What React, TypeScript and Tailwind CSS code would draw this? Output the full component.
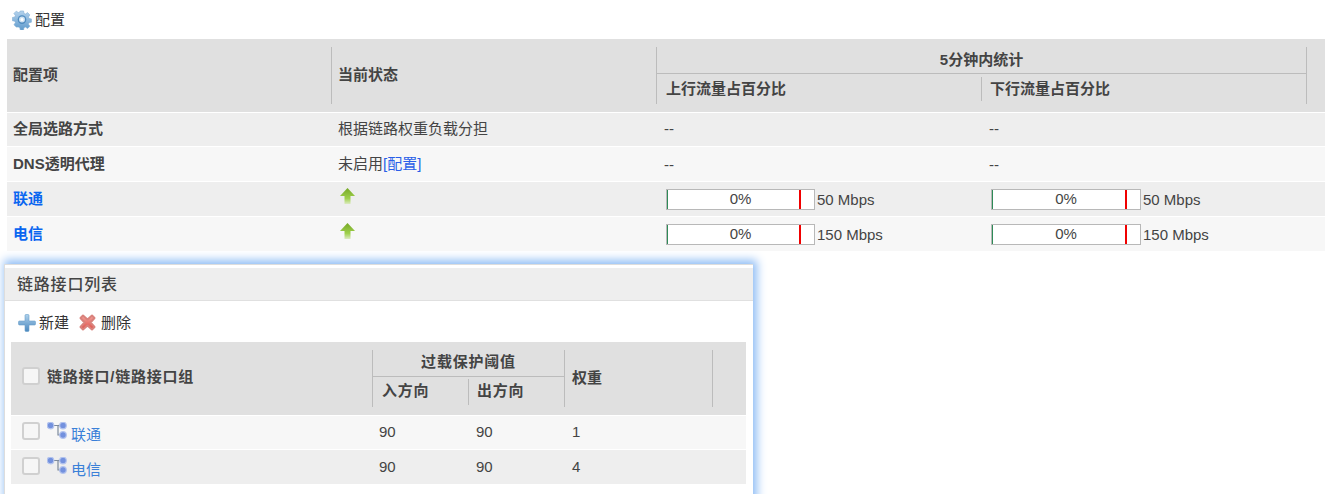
import React from 'react';

const font = { fontFamily: '"Liberation Sans", "Noto Sans CJK SC", sans-serif' };

const Gear = () => (
    <svg width="20" height="20" viewBox="0 0 20 20">
        <defs>
            <linearGradient id="gearFill" x1="0" y1="0" x2="0" y2="1">
                <stop offset="0" stopColor="#b4d2ec" />
                <stop offset="1" stopColor="#5f9bcd" />
            </linearGradient>
        </defs>
        <path
            d="M8.2 1h3.4l.5 2.6 1.500.6 2.200-1.500 2.400 2.400-1.500 2.200.6 1.500 2.500.5v3.400l-2.500.5-.6 1.500 1.500 2.200-2.400 2.400-2.200-1.500-1.500.6-.5 2.500H8.200l-.5-2.500-1.500-.6L4 17.800l-2.400-2.400 1.500-2.200-.6-1.500L0 11.200V7.800l2.500-.5.6-1.500L1.600 3.600 4 1.200l2.200 1.500 1.500-.6z"
            transform="translate(0.400 0) scale(0.960)"
            fill="url(#gearFill)"
            stroke="#7fadd3"
            strokeWidth="0.600"
        />
        <circle cx="10" cy="9.600" r="4.300" fill="#4f8cc0" />
        <circle cx="10" cy="9.600" r="3" fill="#cfe2f2" />
        <circle cx="10" cy="9.600" r="1.500" fill="#ffffff" />
    </svg>
);

const UpArrow = () => (
    <svg width="15" height="17" viewBox="0 0 15 17" className="block">
        <defs>
            <linearGradient id="arrowFill" x1="0" y1="0" x2="0" y2="1">
                <stop offset="0" stopColor="#76a826" />
                <stop offset="0.65" stopColor="#9fd04c" />
                <stop offset="1" stopColor="#dcebc0" />
            </linearGradient>
        </defs>
        <path d="M7.500 0 15 8H10.500V16H4.500V8H0Z" fill="url(#arrowFill)" />
    </svg>
);

const PlusIcon = () => (
    <svg width="18" height="18" viewBox="0 0 18 18">
        <defs>
            <linearGradient id="plusFill" x1="0" y1="0" x2="0" y2="1">
                <stop offset="0" stopColor="#b0d2ec" />
                <stop offset="1" stopColor="#4a88bf" />
            </linearGradient>
        </defs>
        <path
            d="M7 1.500a1 1 0 0 1 1-1h2a1 1 0 0 1 1 1V7h5.500a1 1 0 0 1 1 1v2a1 1 0 0 1-1 1H11v5.500a1 1 0 0 1-1 1H8a1 1 0 0 1-1-1V11H1.500a1 1 0 0 1-1-1V8a1 1 0 0 1 1-1H7z"
            fill="url(#plusFill)"
            stroke="#6a9fcb"
            strokeWidth="0.600"
        />
    </svg>
);

const CrossIcon = () => (
    <svg width="17" height="17" viewBox="0 0 17 17">
        <defs>
            <linearGradient id="crossFill" x1="0" y1="0" x2="0" y2="1">
                <stop offset="0" stopColor="#f4a29c" />
                <stop offset="1" stopColor="#de5048" />
            </linearGradient>
        </defs>
        <path
            d="M1.500 4 4 1.500 8.500 5.500 13 1.500 15.500 4 11.500 8.500 15.500 13 13 15.500 8.500 11.500 4 15.500 1.500 13 5.500 8.500Z"
            fill="url(#crossFill)"
            stroke="#d9827c"
            strokeWidth="2"
            strokeLinejoin="round"
        />
    </svg>
);

const RouteIcon = () => (
    <svg width="20" height="17" viewBox="0 0 20 17" className="block">
        <path d="M5 3.500H11V13H15" fill="none" stroke="#7d8a9c" strokeWidth="1.200" />
        <path d="M11 3.500H15" fill="none" stroke="#7d8a9c" strokeWidth="1.200" />
        <circle cx="3.500" cy="3.500" r="3.300" fill="#7391de" stroke="#b4c4ee" strokeWidth="1.200" />
        <circle cx="16" cy="3.500" r="3.300" fill="#7391de" stroke="#b4c4ee" strokeWidth="1.200" />
        <circle cx="16" cy="13" r="3.300" fill="#7391de" stroke="#b4c4ee" strokeWidth="1.200" />
    </svg>
);

const Checkbox = () => (
    <span className="block w-[18px] h-[18px] bg-[#f6f6f6] border-2 border-[#d0d0d0] rounded-[3px]" />
);

const Usage = ({ bandwidth, redLeft }: { bandwidth: string; redLeft: string }) => (
    <div className="flex items-center">
        <div className={`relative h-[21px] bg-white border border-[#b8b8b8] flex items-center justify-center ${redLeft === 'a' ? 'w-[149px]' : 'w-[150px]'}`}>
            <span className="absolute left-0 top-0 bottom-0 w-px bg-[#2e8b57]" />
            <span className={`absolute top-0 bottom-0 w-[2px] bg-[#f00000] ${redLeft === 'a' ? 'left-[132px]' : 'left-[133px]'}`} />
            <span className="-mt-[2px]">0%</span>
        </div>
        <span className="ml-[2px] mt-[1px]">{bandwidth}</span>
    </div>
);

const links = [
    { name: '联通', bandwidth: '50 Mbps', rowBg: 'bg-[#eeeeee]' },
    { name: '电信', bandwidth: '150 Mbps', rowBg: 'bg-[#f7f7f7]' },
];

const interfaces = [
    { name: '联通', weight: '1', rowCls: 'h-[33px] bg-[#f7f7f7]', numCls: 'pb-[2px]', nameCls: 'pt-[6px]' },
    { name: '电信', weight: '4', rowCls: 'h-[34px] bg-[#eeeeee]', numCls: 'pb-[1px]', nameCls: 'pt-[7px]' },
];

const App: React.FC = () => {
    return (
        <div className="h-[494px] w-[1325px] overflow-hidden bg-white text-[15px] leading-none text-[#444444]" style={font}>
            <div className="h-[39px] pl-[12px] pt-[10px] flex items-start gap-[3px]">
                <Gear />
                <span className="text-[#333333] pt-[2px]">配置</span>
            </div>

            <div className="ml-[7px] flex flex-col gap-px">
                <div className="h-[73px] bg-[#e0e0e0] py-[8px] flex font-bold">
                    <div className="w-[325px] pl-[6px] pb-[2px] flex items-center border-r border-[#bcbcbc]">配置项</div>
                    <div className="w-[325px] pl-[6px] pb-[2px] flex items-center border-r border-[#bcbcbc]">当前状态</div>
                    <div className="w-[650px] flex flex-col border-r border-[#bcbcbc]">
                        <div className="h-[27px] flex items-center justify-center border-b border-[#bcbcbc] pb-[2px]">5分钟内统计</div>
                        <div className="flex flex-1 pt-[3px] pb-[3px]">
                            <div className="w-[325px] pl-[9px] flex items-center border-r border-[#bcbcbc] pb-[2px]">上行流量占百分比</div>
                            <div className="pl-[8px] flex items-center pb-[2px]">下行流量占百分比</div>
                        </div>
                    </div>
                </div>

                <div className="h-[33px] bg-[#eeeeee] flex items-center">
                    <div className="w-[325px] pl-[6px] pb-[2px] font-bold">全局选路方式</div>
                    <div className="w-[325px] pl-[6px] pb-[2px]">根据链路权重负载分担</div>
                    <div className="w-[325px] pl-[7px] pb-[2px]">--</div>
                    <div className="pl-[7px] pb-[2px]">--</div>
                </div>
                <div className="h-[34px] bg-[#f7f7f7] flex items-center">
                    <div className="w-[325px] pl-[6px] pb-[2px] font-bold">DNS透明代理</div>
                    <div className="w-[325px] pl-[6px] pb-[2px]">未启用<span className="text-[#2a5fe8]">[配置]</span></div>
                    <div className="w-[325px] pl-[7px]">--</div>
                    <div className="pl-[7px]">--</div>
                </div>
                {links.map((l) => (
                    <div key={l.name} className={`h-[34px] flex items-center ${l.rowBg}`}>
                        <div className="w-[325px] pl-[6px] pb-[2px] font-bold text-[#0a66f0]">{l.name}</div>
                        <div className="w-[325px] pl-[8px] pb-[6px]"><span className="block w-[15px]"><UpArrow /></span></div>
                        <div className="w-[325px] pl-[9px]"><Usage bandwidth={l.bandwidth} redLeft="a" /></div>
                        <div className="pl-[9px]"><Usage bandwidth={l.bandwidth} redLeft="b" /></div>
                    </div>
                ))}
            </div>

            <div className="ml-[4px] mt-[13px] w-[749px] h-[300px] bg-white border-l border-t border-[#dddddd] pt-[3px] shadow-[2px_-2px_9px_2px_#8fbdf5]">
                <div className="h-[33px] bg-[#eeeeee] border-b border-[#e0e0e0] pl-[12px] pt-[1px] flex items-center text-[16px] font-medium tracking-[0.8px] text-[#444444]">
                    链路接口列表
                </div>
                <div className="h-[41px] pl-[13px] pt-[13px] flex items-start text-[#333333]">
                    <PlusIcon />
                    <span className="ml-[3px] pt-[1px]">新建</span>
                    <span className="ml-[10px]"><CrossIcon /></span>
                    <span className="ml-[5px] pt-[1px]">删除</span>
                </div>
                <div className="ml-[6px] w-[735px] flex flex-col gap-px">
                    <div className="h-[73px] bg-[#e0e0e0] py-[8px] flex font-bold">
                        <div className="w-[362px] pl-[11px] pb-[6px] flex items-center gap-[7px] border-r border-[#bcbcbc]">
                            <Checkbox />
                            <span className="pt-[2px] tracking-[0.8px]">链路接口/链路接口组</span>
                        </div>
                        <div className="w-[192px] flex flex-col border-r border-[#bcbcbc]">
                            <div className="h-[27px] flex items-center justify-center border-b border-[#bcbcbc] pb-[3px] tracking-[0.8px]">过载保护阈值</div>
                            <div className="flex flex-1 pt-[2px] pb-[2px] tracking-[0.8px]">
                                <div className="w-[96px] pl-[9px] pb-[4px] flex items-center border-r border-[#bcbcbc]">入方向</div>
                                <div className="pl-[8px] pb-[4px] flex items-center">出方向</div>
                            </div>
                        </div>
                        <div className="w-[148px] pl-[7px] pb-[2px] flex items-center border-r border-[#bcbcbc]">权重</div>
                    </div>
                    {interfaces.map((r) => (
                        <div key={r.name} className={`flex items-center ${r.rowCls}`}>
                            <div className={`w-[362px] pl-[11px] flex items-start h-full ${r.nameCls}`}>
                                <Checkbox />
                                <span className="ml-[7px]"><RouteIcon /></span>
                                <span className="ml-[4px] mt-[5px] text-[#3a80d8]">{r.name}</span>
                            </div>
                            <div className={`w-[97px] pl-[6px] ${r.numCls}`}>90</div>
                            <div className={`w-[96px] pl-[6px] ${r.numCls}`}>90</div>
                            <div className={`pl-[6px] ${r.numCls}`}>{r.weight}</div>
                        </div>
                    ))}
                </div>
            </div>
        </div>
    );
};

export default App;
